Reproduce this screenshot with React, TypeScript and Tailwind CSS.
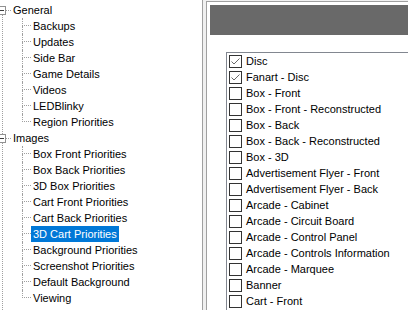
import React from "react";

type TreeNode = { label: string; children?: string[] };

const tree: TreeNode[] = [
  {
    label: "General",
    children: ["Backups", "Updates", "Side Bar", "Game Details", "Videos", "LEDBlinky", "Region Priorities"],
  },
  {
    label: "Images",
    children: [
      "Box Front Priorities",
      "Box Back Priorities",
      "3D Box Priorities",
      "Cart Front Priorities",
      "Cart Back Priorities",
      "3D Cart Priorities",
      "Background Priorities",
      "Screenshot Priorities",
      "Default Background",
      "Viewing",
    ],
  },
];

const checks: { label: string; checked: boolean }[] = [
  { label: "Disc", checked: true },
  { label: "Fanart - Disc", checked: true },
  { label: "Box - Front", checked: false },
  { label: "Box - Front - Reconstructed", checked: false },
  { label: "Box - Back", checked: false },
  { label: "Box - Back - Reconstructed", checked: false },
  { label: "Box - 3D", checked: false },
  { label: "Advertisement Flyer - Front", checked: false },
  { label: "Advertisement Flyer - Back", checked: false },
  { label: "Arcade - Cabinet", checked: false },
  { label: "Arcade - Circuit Board", checked: false },
  { label: "Arcade - Control Panel", checked: false },
  { label: "Arcade - Controls Information", checked: false },
  { label: "Arcade - Marquee", checked: false },
  { label: "Banner", checked: false },
  { label: "Cart - Front", checked: false },
];

const font = { fontFamily: '"Liberation Sans", Arial, sans-serif' };

function RootRow({ label }: { label: string }) {
  return (
    <div className="flex h-4 items-center">
      <div className="relative z-10 -ml-[3px] flex h-[9px] w-[9px] shrink-0 items-center justify-center border border-[#919191] bg-white">
        <div className="h-px w-[5px] bg-[#3c3c3c]" />
      </div>
      <div className="w-[5px] shrink-0 border-t border-dotted border-[#a0a0a0]" />
      <span className="px-[2px] leading-4 text-black">{label}</span>
    </div>
  );
}

function ChildRow({ label, last, selected }: { label: string; last: boolean; selected: boolean }) {
  return (
    <div className="flex h-4">
      <div className="w-[22px] shrink-0" />
      <div className="flex w-[9px] shrink-0 flex-col">
        <div className="h-[8px] border-b border-l border-dotted border-[#a0a0a0]" />
        <div className={last ? "flex-1" : "flex-1 border-l border-dotted border-[#a0a0a0]"} />
      </div>
      <span
        className={
          selected
            ? "bg-[#0078d7] px-[2px] leading-4 whitespace-nowrap text-white"
            : "px-[2px] leading-4 whitespace-nowrap text-black"
        }
      >
        {label}
      </span>
    </div>
  );
}

function CheckBox({ checked }: { checked: boolean }) {
  return (
    <div className="flex h-[13px] w-[13px] shrink-0 items-center justify-center border border-[#333333] bg-white">
      {checked && (
        <svg width="11" height="11" viewBox="0 0 11 11">
          <path d="M1.5 5.5 L4 8 L9.5 2.5" fill="none" stroke="#6a6a6a" strokeWidth="1" />
        </svg>
      )}
    </div>
  );
}

export default function App() {
  return (
    <div className="flex h-[310px] w-[408px] overflow-hidden bg-[#f0f0f0] text-[11px]" style={font}>
      <div className="relative h-full w-[203px] shrink-0 overflow-hidden border-r border-[#a0a0a0] bg-white pt-[2px]">
        <div className="absolute bottom-0 left-[2px] top-[15px] border-l border-dotted border-[#a0a0a0]" />
        {tree.map((node) => (
          <React.Fragment key={node.label}>
            <RootRow label={node.label} />
            {node.children?.map((c, i) => (
              <ChildRow
                key={c}
                label={c}
                last={i === node.children!.length - 1}
                selected={c === "3D Cart Priorities"}
              />
            ))}
          </React.Fragment>
        ))}
      </div>
      <div className="ml-[3px] mt-px flex flex-1 flex-col overflow-hidden border-l border-t border-[#a0a0a0] bg-white pl-[3px] pt-[3px]">
        <div className="h-[30px] w-full shrink-0 bg-[#696969]" />
        <div className="ml-[16px] mt-[17px] flex flex-1 flex-col border-l border-t border-[#828790] bg-white pl-[2px]">
          {checks.map((c) => (
            <div key={c.label} className="flex h-4 shrink-0 items-center gap-[4px]">
              <CheckBox checked={c.checked} />
              <span className="whitespace-nowrap leading-4 text-black">{c.label}</span>
            </div>
          ))}
        </div>
      </div>
    </div>
  );
}
